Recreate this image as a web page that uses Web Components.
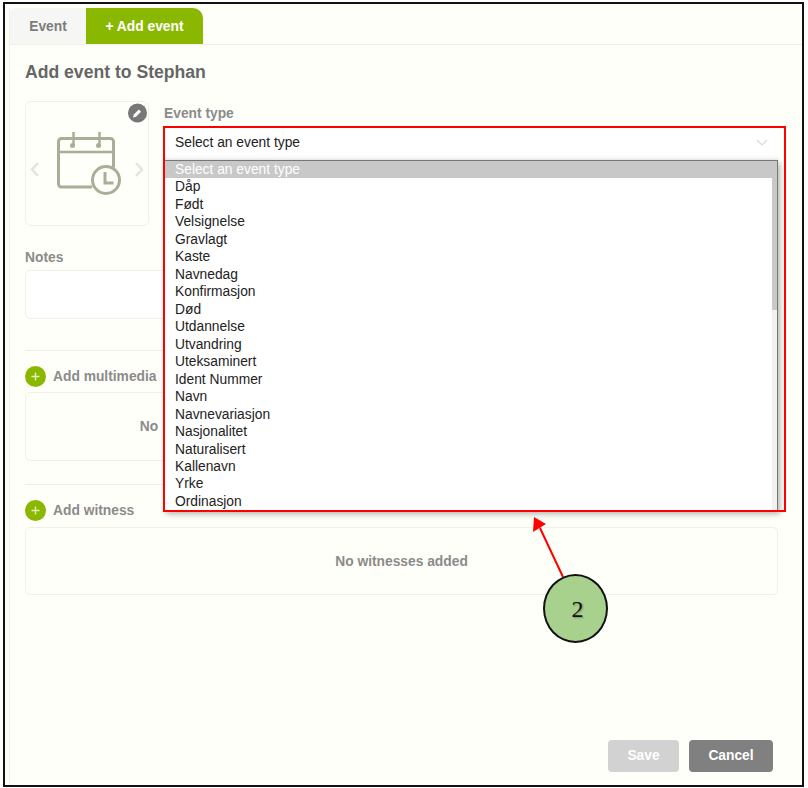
<!DOCTYPE html>
<html lang="en">
<head>
<meta charset="utf-8">
<title>Add event</title>
<style>
    html, body { margin: 0; padding: 0; background: #fff; }
    body { font-family: "Liberation Sans", Arial, sans-serif; }
</style>
</head>
<body>
<event-dialog>
    <event-tabs slot="tabs"></event-tabs>
    <h-title slot="title">Add event to Stephan</h-title>
    <event-picture slot="picture"></event-picture>
    <event-select slot="type" label="Event type" value="Select an event type">
        <event-option selected>Select an event type</event-option>
        <event-option>Dåp</event-option>
        <event-option>Født</event-option>
        <event-option>Velsignelse</event-option>
        <event-option>Gravlagt</event-option>
        <event-option>Kaste</event-option>
        <event-option>Navnedag</event-option>
        <event-option>Konfirmasjon</event-option>
        <event-option>Død</event-option>
        <event-option>Utdannelse</event-option>
        <event-option>Utvandring</event-option>
        <event-option>Uteksaminert</event-option>
        <event-option>Ident Nummer</event-option>
        <event-option>Navn</event-option>
        <event-option>Navnevariasjon</event-option>
        <event-option>Nasjonalitet</event-option>
        <event-option>Naturalisert</event-option>
        <event-option>Kallenavn</event-option>
        <event-option>Yrke</event-option>
        <event-option>Ordinasjon</event-option>
    </event-select>
    <add-section slot="media" class="media" label="Add multimedia" empty="No"></add-section>
    <add-section slot="witness" class="witness" label="Add witness" empty="No witnesses added"></add-section>
</event-dialog>
<script>
class EventDialog extends HTMLElement {
    constructor() {
        super();
        this.attachShadow({ mode: 'open' });
        this.shadowRoot.innerHTML = `
<style>
    :host {
        display: flex;
        flex-direction: column;
        position: relative;
        box-sizing: border-box;
        width: 801px;
        height: 785px;
        margin: 2px 0 0 3px;
        padding: 4px 0 0 4px;
        border: 2px solid #111;
        background: #fffff9;
        font-family: "Liberation Sans", Arial, sans-serif;
    }
    .panel {
        flex: 1;
        display: flex;
        flex-direction: column;
        border-left: 1px solid #efefe9;
    }
    .body {
        flex: 1;
        display: flex;
        flex-direction: column;
        padding: 17px 24px 13px 15px;
    }
    .top { display: flex; gap: 15px; margin-top: 19px; }
    .notes-label {
        margin-top: 25px;
        font-size: 13.8px;
        line-height: 14px;
        font-weight: bold;
        color: #8b8b8b;
    }
    .notes {
        height: 47px;
        margin-top: 5px;
        background: #fff;
        border: 1px solid #f0f0ea;
        border-radius: 5px;
    }
    .actions { display: flex; justify-content: flex-end; gap: 10px; margin-top: auto; padding-right: 5px; }
    .btn {
        height: 32px;
        border-radius: 4px;
        color: #fff;
        font-size: 13.8px;
        font-weight: bold;
        line-height: 32px;
        text-align: center;
    }
    .save { width: 71px; background: #d2d2d2; }
    .cancel { width: 84px; background: #808080; }
</style>
<div class="panel">
    <slot name="tabs"></slot>
    <div class="body">
        <slot name="title"></slot>
        <div class="top">
            <slot name="picture"></slot>
            <slot name="type"></slot>
        </div>
        <div class="notes-label">Notes</div>
        <div class="notes"></div>
        <slot name="media"></slot>
        <slot name="witness"></slot>
        <div class="actions">
            <div class="btn save">Save</div>
            <div class="btn cancel">Cancel</div>
        </div>
    </div>
</div>
<event-callout></event-callout>`;
    }
}

class EventTabs extends HTMLElement {
    constructor() {
        super();
        this.attachShadow({ mode: 'open' });
        this.shadowRoot.innerHTML = `
<style>
    :host { display: flex; height: 36px; border-bottom: 1px solid #efefe9; }
    div {
        display: flex;
        align-items: center;
        justify-content: center;
        font-size: 13.8px;
        font-weight: bold;
    }
    .event { width: 76px; background: #f6f6f4; color: #7d7d7d; border-radius: 6px 0 0 0; }
    .add { width: 117px; background: #8ab800; color: #fff; border-radius: 0 10px 0 0; }
</style>
<div class="event">Event</div>
<div class="add">+ Add event</div>`;
    }
}

class HTitle extends HTMLElement {
    constructor() {
        super();
        this.attachShadow({ mode: 'open' });
        this.shadowRoot.innerHTML = `
<style>
    :host { display: block; font-size: 17.6px; line-height: 20px; font-weight: bold; color: #666; }
</style>
<slot></slot>`;
    }
}

class EventPicture extends HTMLElement {
    constructor() {
        super();
        this.attachShadow({ mode: 'open' });
        this.shadowRoot.innerHTML = `
<style>
    :host {
        display: block;
        position: relative;
        box-sizing: border-box;
        width: 124px;
        height: 125px;
        border: 1px solid #f0f0ea;
        border-radius: 6px;
    }
    svg { display: block; }
</style>
<svg width="122" height="123" viewBox="26 102 122 123" fill="none">
    <path d="M38 163l-6 6.5 6 6.5M136 163l6 6.5-6 6.5" stroke="#e5e5de" stroke-width="2.5"/>
    <path d="M92 187H61.500a3 3 0 0 1-3-3V141.500a3 3 0 0 1 3-3h49a3 3 0 0 1 3 3v26" stroke="#a9ae98" stroke-width="3"/>
    <path d="M58.500 152h55" stroke="#a9ae98" stroke-width="2.5"/>
    <path d="M73.500 132v13M99.500 132v13" stroke="#a9ae98" stroke-width="2.5"/>
    <circle cx="72.500" cy="145.500" r="2.500" fill="#a9ae98"/>
    <circle cx="98.500" cy="145.500" r="2.500" fill="#a9ae98"/>
    <circle cx="106" cy="180" r="13.500" fill="#fffff9" stroke="#a9ae98" stroke-width="3"/>
    <path d="M105 172v11h8.500" stroke="#a9ae98" stroke-width="3"/>
    <circle cx="137.500" cy="113" r="9.500" fill="#777"/>
    <path d="M133 117.500l.8-3 5-5 2.200 2.200-5 5z" fill="#fff"/>
</svg>`;
    }
}

class EventSelect extends HTMLElement {
    constructor() {
        super();
        this.attachShadow({ mode: 'open' });
        this.shadowRoot.innerHTML = `
<style>
    :host { display: block; position: relative; flex: 1; padding-top: 6px; }
    .label { font-size: 13.8px; line-height: 14px; font-weight: bold; color: #8b8b8b; }
    .field {
        display: flex;
        align-items: center;
        justify-content: space-between;
        box-sizing: border-box;
        height: 33px;
        margin-top: 6px;
        padding: 0 10px 2px 11px;
        background: #fff;
        font-size: 13.8px;
        color: #222;
        box-shadow: inset 0 -6px 6px -6px #e6e6e6;
    }
    .list {
        position: absolute;
        left: 0;
        top: 59px;
        z-index: 2;
        box-sizing: border-box;
        width: 614px;
        height: 351px;
        overflow: hidden;
        background: #fff;
        border: 1px solid #777;
        border-bottom: 0;
        box-shadow: 2px 3px 6px rgba(0, 0, 0, 0.3);
    }
    .bar {
        position: absolute;
        right: 0;
        top: 0;
        bottom: 0;
        width: 5px;
        background: #f1f1f1;
    }
    .thumb { width: 5px; height: 149px; background: #c8c8c8; }
    .items { margin-right: 5px; }
</style>
<div class="label"></div>
<div class="field">
    <span class="value"></span>
    <svg width="12" height="7" viewBox="0 0 12 7" fill="none"><path d="M1 1l5 5 5-5" stroke="#d8d8d8" stroke-width="1.2"/></svg>
</div>
<div class="list">
    <div class="items"><slot></slot></div>
    <div class="bar"><div class="thumb"></div></div>
</div>`;
    }
    connectedCallback() {
        this.shadowRoot.querySelector('.label').innerText = this.getAttribute('label');
        this.shadowRoot.querySelector('.value').innerText = this.getAttribute('value');
    }
}

class EventOption extends HTMLElement {
    constructor() {
        super();
        this.attachShadow({ mode: 'open' });
        this.shadowRoot.innerHTML = `
<style>
    :host {
        display: block;
        height: 17.47px;
        padding-left: 10px;
        font-size: 13.8px;
        line-height: 17px;
        color: #222;
        white-space: nowrap;
    }
    :host([selected]) { background: #c8c8c8; color: #fff; }
</style>
<slot></slot>`;
    }
}

class AddSection extends HTMLElement {
    constructor() {
        super();
        this.attachShadow({ mode: 'open' });
        this.shadowRoot.innerHTML = `
<style>
    :host { display: block; }
    :host(.media) { margin-top: 31px; --box-h: 69px; --box-gap: 5px; --box-inset: 505px; }
    :host(.witness) { margin-top: 23px; --box-h: 68px; --box-gap: 6px; --box-inset: 0px; }
    hr { height: 1px; margin: 0; border: 0; background: #efefe9; }
    .head { display: flex; align-items: center; gap: 7px; height: 21px; margin-top: 15px; }
    .label { font-size: 13.8px; font-weight: bold; color: #8b8b8b; }
    svg { display: block; }
    .box {
        display: flex;
        align-items: center;
        justify-content: center;
        box-sizing: border-box;
        height: var(--box-h);
        margin-top: var(--box-gap);
        padding-right: var(--box-inset);
        border: 1px solid #f0f0ea;
        border-radius: 5px;
        font-size: 13.8px;
        font-weight: bold;
        color: #8b8b8b;
    }
</style>
<hr>
<div class="head">
    <svg width="21" height="21" viewBox="0 0 21 21"><circle cx="10.5" cy="10.5" r="10.5" fill="#8ab800"/><path d="M10.5 6.5v8M6.5 10.5h8" stroke="#e4efb8" stroke-width="1.4"/></svg>
    <span class="label"></span>
</div>
<div class="box"></div>`;
    }
    connectedCallback() {
        this.shadowRoot.querySelector('.label').innerText = this.getAttribute('label');
        this.shadowRoot.querySelector('.box').innerText = this.getAttribute('empty');
    }
}

// red highlight, arrow and numbered circle drawn over the screenshot
class EventCallout extends HTMLElement {
    constructor() {
        super();
        this.attachShadow({ mode: 'open' });
        this.shadowRoot.innerHTML = `
<style>
    :host { position: absolute; left: -2px; top: -2px; right: 0; bottom: 0; z-index: 5; pointer-events: none; }
    .rect {
        position: absolute;
        left: 160px;
        top: 124px;
        width: 619px;
        height: 382px;
        border: 2px solid #f00;
    }
    svg { position: absolute; left: 0; top: 0; }
    .num {
        position: absolute;
        left: 540px;
        top: 572px;
        box-sizing: border-box;
        width: 65px;
        height: 69px;
        padding-left: 4px;
        border: 2px solid #111;
        border-radius: 50%;
        background: #a9d18e;
        font: 24px/67px "Liberation Serif", "Times New Roman", serif;
        text-align: center;
        color: #111;
        text-shadow: 1px 1px 2px rgba(0, 0, 0, 0.3);
    }
</style>
<div class="rect"></div>
<svg width="801" height="785" viewBox="0 0 801 785" fill="none">
    <path d="M560 575L537 526" stroke="#f00" stroke-width="2"/>
    <path d="M531 515L543 522L530 530Z" fill="#f00"/>
</svg>
<div class="num">2</div>`;
    }
}

window.customElements.define('event-callout', EventCallout);
window.customElements.define('event-dialog', EventDialog);
window.customElements.define('event-tabs', EventTabs);
window.customElements.define('h-title', HTitle);
window.customElements.define('event-picture', EventPicture);
window.customElements.define('event-select', EventSelect);
window.customElements.define('event-option', EventOption);
window.customElements.define('add-section', AddSection);
</script>
</body>
</html>
